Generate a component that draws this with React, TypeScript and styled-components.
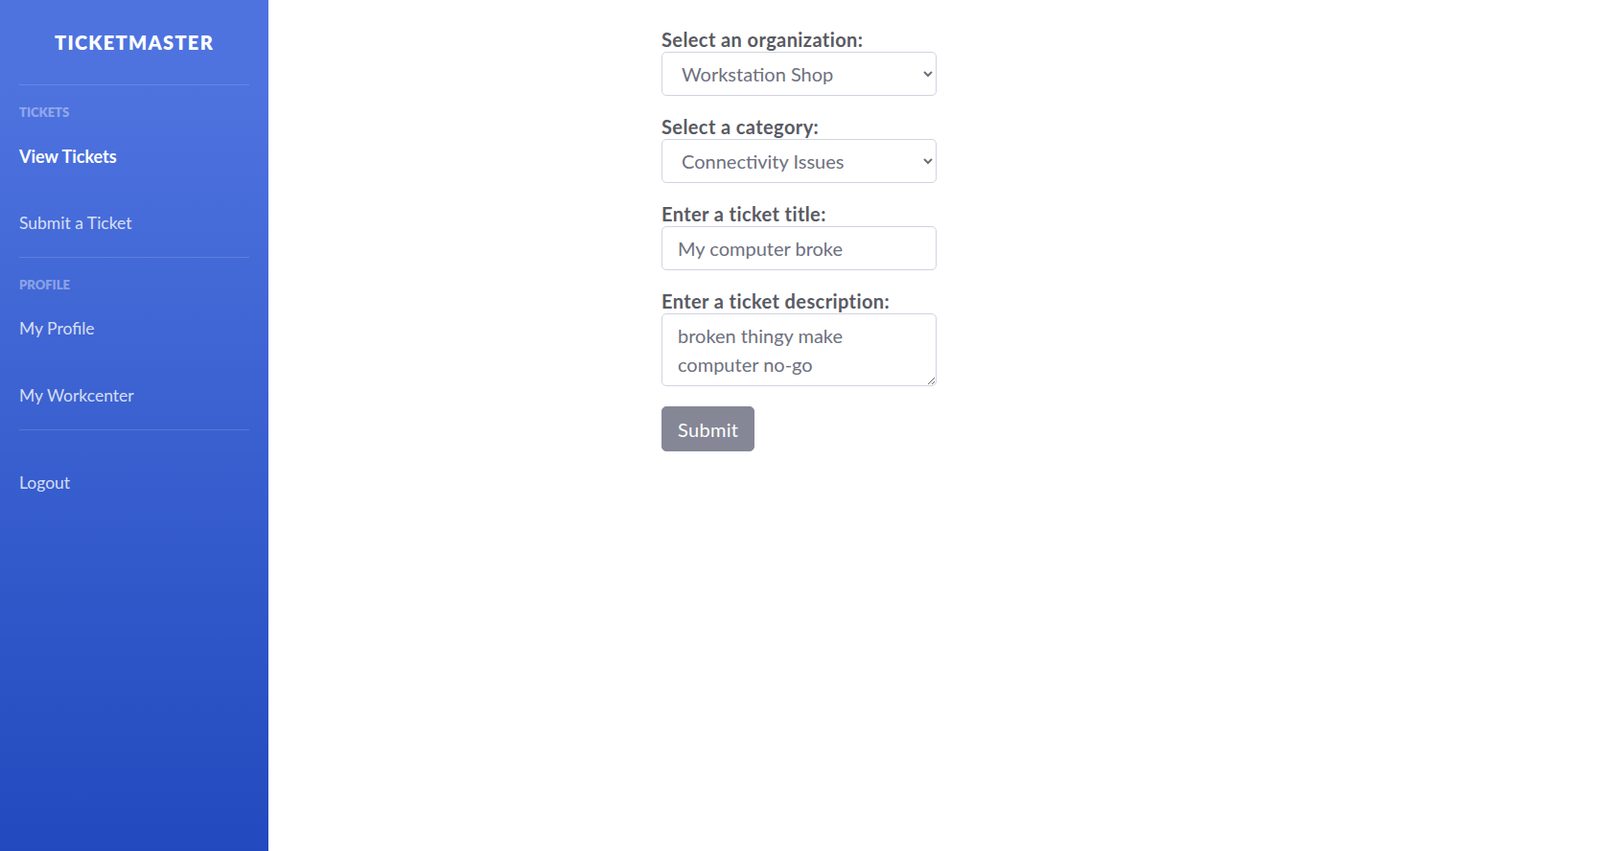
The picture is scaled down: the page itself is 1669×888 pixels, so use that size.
import React from 'react'
import styled, { createGlobalStyle } from 'styled-components'

const GlobalStyle = createGlobalStyle`
  html, body {
    margin: 0;
    padding: 0;
  }
  body {
    font-family: 'Lato', 'Noto Sans', sans-serif;
    background: #fff;
  }
`

const Layout = styled.div`
  display: flex;
  min-height: 100vh;
`

const Sidebar = styled.nav`
  width: 280px;
  flex-shrink: 0;
  display: flex;
  flex-direction: column;
  background: linear-gradient(180deg, #4e73df 10%, #224abe 100%);
  color: #fff;
`

const Brand = styled.div`
  height: 88px;
  display: flex;
  align-items: center;
  justify-content: center;
  font-size: 20px;
  font-weight: 800;
  letter-spacing: 1.3px;
  text-transform: uppercase;
`

const Divider = styled.hr`
  margin: 0 20px;
  border: 0;
  border-top: 1px solid rgba(255, 255, 255, 0.15);
`

const Heading = styled.div`
  padding: 20px 20px 3px;
  font-size: 13px;
  line-height: 16px;
  font-weight: 800;
  text-transform: uppercase;
  color: rgba(255, 255, 255, 0.4);
`

const NavLink = styled.a<{ $active?: boolean; $gapTop?: boolean }>`
  display: flex;
  align-items: center;
  height: 70px;
  padding: 0 20px;
  margin-top: ${(p) => (p.$gapTop ? '20px' : '0')};
  font-size: ${(p) => (p.$active ? '18px' : '17.5px')};
  line-height: 24px;
  font-weight: ${(p) => (p.$active ? 700 : 400)};
  color: ${(p) => (p.$active ? '#fff' : 'rgba(255, 255, 255, 0.8)')};
  text-decoration: none;
  cursor: pointer;
`

const Main = styled.main`
  flex: 1;
  padding: 28px 0 0 410px;
`

const Form = styled.form`
  width: 287px;
`

const Group = styled.div`
  margin-bottom: 19px;
`

const Label = styled.label`
  display: block;
  font-size: 20px;
  line-height: 26px;
  letter-spacing: 0.4px;
  font-weight: 700;
  color: #595a63;
`

const fieldBase = `
  display: block;
  width: 100%;
  box-sizing: border-box;
  font-family: 'Lato', 'Noto Sans', sans-serif;
  font-size: 20px;
  line-height: 30px;
  color: #6e707e;
  background: #fff;
  border: 1px solid #d1d3e2;
  border-radius: 5px;
  outline: none;
`

const Select = styled.select`
  ${fieldBase}
  height: 46px;
  padding: 0 12px 0 16px;
`

const Input = styled.input`
  ${fieldBase}
  height: 46px;
  padding: 7px 16px;
`

const TextArea = styled.textarea`
  ${fieldBase}
  height: 76px;
  padding: 7px 16px;
  resize: vertical;
`

const SubmitButton = styled.button`
  margin-top: 2px;
  height: 47px;
  padding: 0 16px;
  font-family: 'Lato', 'Noto Sans', sans-serif;
  font-size: 20px;
  line-height: 30px;
  letter-spacing: 0.3px;
  color: #fff;
  background: #858796;
  border: 1px solid #858796;
  border-radius: 5px;
  cursor: pointer;
`

export default function App() {
  return (
    <>
      <GlobalStyle />
      <Layout>
        <Sidebar>
          <Brand>Ticketmaster</Brand>
          <Divider />
          <Heading>Tickets</Heading>
          <NavLink $active>View Tickets</NavLink>
          <NavLink>Submit a Ticket</NavLink>
          <Divider />
          <Heading>Profile</Heading>
          <NavLink>My Profile</NavLink>
          <NavLink>My Workcenter</NavLink>
          <Divider />
          <NavLink $gapTop>Logout</NavLink>
        </Sidebar>
        <Main>
          <Form onSubmit={(e) => e.preventDefault()}>
            <Group>
              <Label htmlFor="org">Select an organization:</Label>
              <Select id="org" defaultValue="ws">
                <option value="ws">Workstation Shop</option>
              </Select>
            </Group>
            <Group>
              <Label htmlFor="cat">Select a category:</Label>
              <Select id="cat" defaultValue="conn">
                <option value="conn">Connectivity Issues</option>
              </Select>
            </Group>
            <Group>
              <Label htmlFor="title">Enter a ticket title:</Label>
              <Input id="title" defaultValue="My computer broke" />
            </Group>
            <Group>
              <Label htmlFor="desc">Enter a ticket description:</Label>
              <TextArea id="desc" defaultValue="broken thingy make computer no-go" />
            </Group>
            <SubmitButton type="submit">Submit</SubmitButton>
          </Form>
        </Main>
      </Layout>
    </>
  )
}
